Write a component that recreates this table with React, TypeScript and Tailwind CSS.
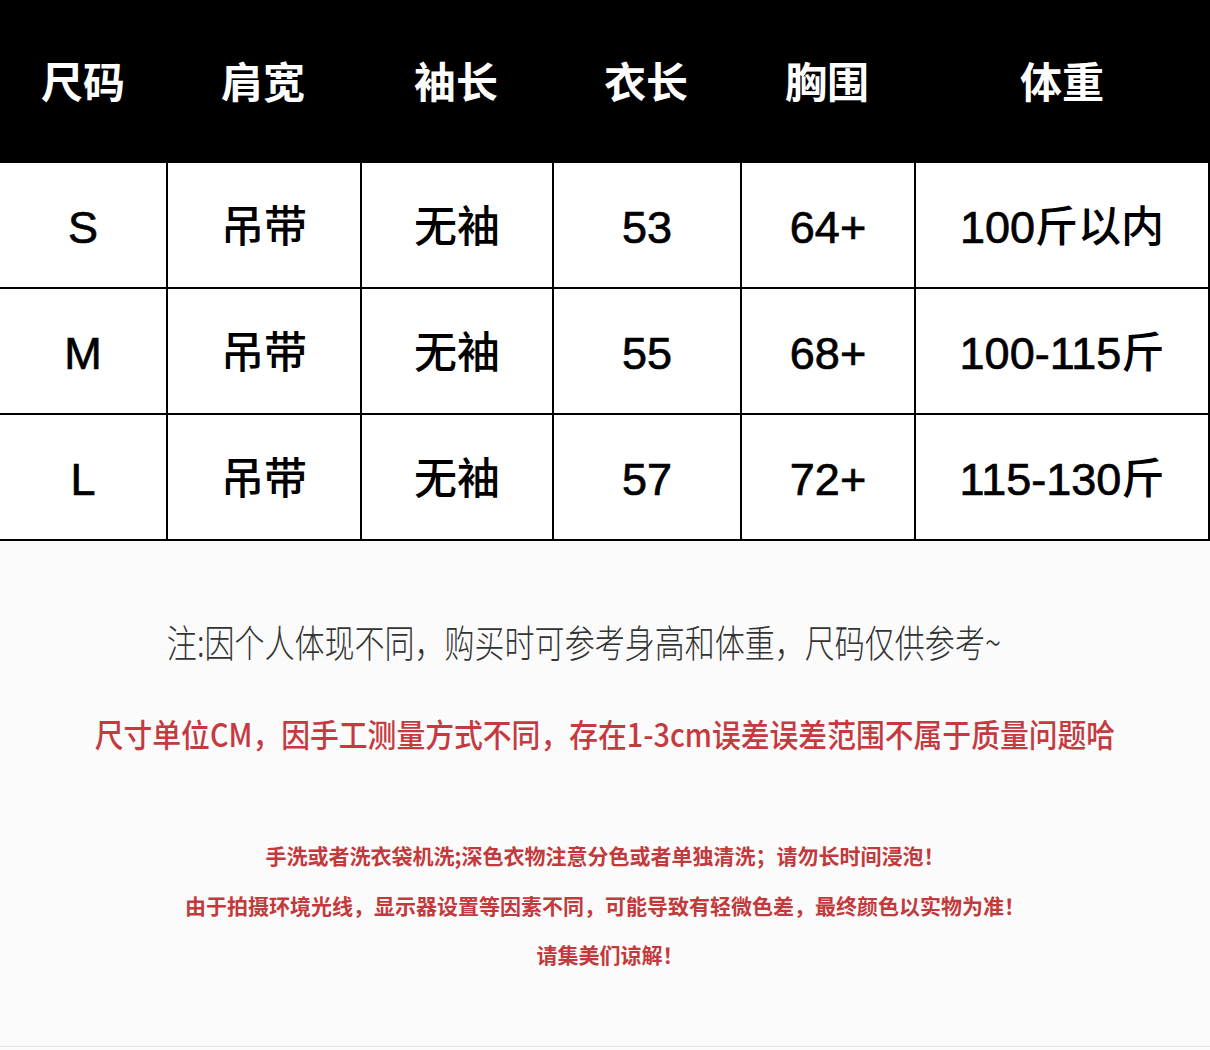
import React from 'react';

const FONT = "font-['Liberation_Sans','Noto_Sans_CJK_SC',sans-serif]";
const CJK = "font-['Noto_Sans_CJK_SC','Noto_Sans',sans-serif]";

const headers = ['尺码', '肩宽', '袖长', '衣长', '胸围', '体重'];

const rows: string[][] = [
  ['S', '吊带', '无袖', '53', '64+', '100斤以内'],
  ['M', '吊带', '无袖', '55', '68+', '100-115斤'],
  ['L', '吊带', '无袖', '57', '72+', '115-130斤'],
];

// widths include the 2px left border of each column after the first
const colClass = [
  'w-[166px]',
  'w-[194px] border-l-2 border-black',
  'w-[192px] border-l-2 border-black',
  'w-[188px] border-l-2 border-black',
  'w-[174px] border-l-2 border-black',
  'flex-1 border-l-2 border-black',
];

const headClass = ['w-[166px]', 'w-[194px]', 'w-[192px]', 'w-[188px]', 'w-[174px]', 'flex-1'];

// latin runs are set a touch larger and heavier than the CJK ones
const Cell: React.FC<{ text: string }> = ({ text }) => {
  const parts = text.match(/[\x00-\x7f]+|[^\x00-\x7f]+/g) ?? [];
  return (
    <>
      {parts.map((p, i) =>
        /^[\x00-\x7f]+$/.test(p) ? (
          <span key={i} className="text-[45px] [-webkit-text-stroke:0.7px_black]">
            {p}
          </span>
        ) : (
          <span key={i}>{p}</span>
        )
      )}
    </>
  );
};

const SizeTable: React.FC = () => (
  <div className={FONT}>
    <div className="flex h-[163px] bg-black text-white">
      {headers.map((h, i) => (
        <div
          key={h}
          className={`${headClass[i]} flex items-center justify-center pt-1 text-[42px] font-bold leading-none`}
        >
          {h}
        </div>
      ))}
    </div>
    {rows.map((r) => (
      <div key={r[0]} className="flex h-[126px] border-b-2 border-r-2 border-black bg-white text-black">
        {r.map((c, i) => (
          <div
            key={i}
            className={`${colClass[i]} flex items-center justify-center pt-1 text-[43px] font-medium leading-none`}
          >
            <Cell text={c} />
          </div>
        ))}
      </div>
    ))}
  </div>
);

const Notes: React.FC = () => (
  <div className={`${CJK} flex flex-1 flex-col items-center bg-[#fbfbfb]`}>
    <div className="mt-[75px] flex h-[48px] items-center pr-[42px]">
      <span className="inline-block origin-center scale-x-[0.79] whitespace-nowrap text-[38px] font-light text-[#333333]">
        注:因个人体现不同，购买时可参考身高和体重，尺码仅供参考~
      </span>
    </div>
    <div className="mt-[49px] flex h-[40px] items-center">
      <span className="inline-block origin-center scale-x-[0.9] whitespace-nowrap text-[32px] font-medium text-[#c53a3f]">
        尺寸单位CM，因手工测量方式不同，存在1-3cm误差误差范围不属于质量问题哈
      </span>
    </div>
    <div className="mt-[88px] flex h-[30px] items-center whitespace-nowrap text-[21px] font-bold text-[#c23a3c]">
      手洗或者洗衣袋机洗;深色衣物注意分色或者单独清洗；请勿长时间浸泡！
    </div>
    <div className="mt-[20px] flex h-[30px] items-center whitespace-nowrap text-[21px] font-bold text-[#c23a3c]">
      由于拍摄环境光线，显示器设置等因素不同，可能导致有轻微色差，最终颜色以实物为准！
    </div>
    <div className="mt-[19px] flex h-[30px] items-center pl-[10px] whitespace-nowrap text-[21px] font-bold text-[#c23a3c]">
      请集美们谅解！
    </div>
    <div className="mt-auto mb-[3px] h-px w-full bg-[#e6e6e6]" />
  </div>
);

export default function App() {
  return (
    <div className="flex h-[1050px] w-[1210px] flex-col overflow-hidden bg-white">
      <SizeTable />
      <Notes />
    </div>
  );
}
